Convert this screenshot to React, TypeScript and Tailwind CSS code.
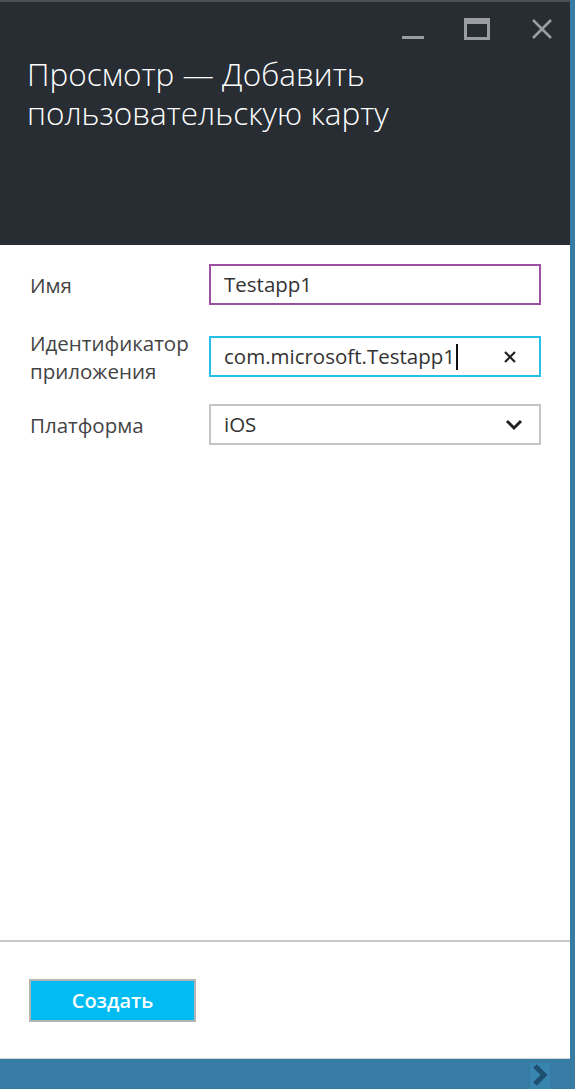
import React from "react";

const font = { fontFamily: '"Open Sans", "Noto Sans", sans-serif' };

const WindowControls: React.FC = () => (
  <div className="flex items-start justify-end h-[40px] pt-[16px] pr-[17px]">
    <svg width="22" height="22" viewBox="0 0 22 22" className="mr-[40px]">
      <rect x="0" y="18" width="22" height="3" fill="#9a9ea2" />
    </svg>
    <svg width="26" height="22" viewBox="0 0 26 22" className="mr-[41px]">
      <rect x="1.5" y="1.5" width="23" height="19" fill="none" stroke="#9a9ea2" strokeWidth="3" />
      <rect x="1" y="1" width="24" height="5" fill="#9a9ea2" />
    </svg>
    <svg width="22" height="22" viewBox="0 0 22 22">
      <path d="M2 2 L20 20 M20 2 L2 20" stroke="#9a9ea2" strokeWidth="2.5" />
    </svg>
  </div>
);

const Field: React.FC<{ label: React.ReactNode; children: React.ReactNode; className?: string }> = ({ label, children, className }) => (
  <div className={`flex items-center h-[41px] ${className ?? ""}`}>
    <div className="w-[209px] shrink-0 pl-[30px] text-[20.5px] leading-[28px] text-[#444]">{label}</div>
    {children}
  </div>
);

export default function App() {
  return (
    <div className="w-[575px] h-[1089px] flex flex-col bg-[#367ca4]" style={font}>
      <div className="flex flex-1">
        <div className="w-[570px] flex flex-col bg-white">
          <div className="h-[245px] bg-[#272d33] border-t-2 border-[#4a4f54]">
            <WindowControls />
            <h1 className="pl-[27px] pt-[12px] text-[31.5px] leading-[39px] font-light text-white">
              Просмотр — Добавить
              <br />
              пользовательскую карту
            </h1>
          </div>

          <div className="flex-1 pt-[19px]">
            <Field label="Имя">
              <div className="w-[332px] h-[41px] border-2 border-[#9c4f9d] flex items-center pl-[13px] text-[20.5px] text-[#333]">
                Testapp1
              </div>
            </Field>
            <Field label={<>Идентификатор<br />приложения</>} className="mt-[31px]">
              <div className="w-[332px] h-[41px] border-2 border-[#25bfe8] flex items-center pl-[13px] pr-[22px] text-[20.5px] text-[#333]">
                <span>com.microsoft.Testapp1</span>
                <span className="w-[2px] h-[26px] bg-[#111] ml-[1px]" />
                <svg width="14" height="14" viewBox="0 0 14 14" className="ml-auto">
                  <path d="M2 2 L12 12 M12 2 L2 12" stroke="#222" strokeWidth="2.2" />
                </svg>
              </div>
            </Field>
            <Field label="Платформа" className="mt-[27px]">
              <div className="w-[332px] h-[41px] border-2 border-[#c4c4c4] flex items-center pl-[13px] pr-[16px] text-[20.5px] text-[#333]">
                <span>iOS</span>
                <svg width="18" height="12" viewBox="0 0 18 12" className="ml-auto">
                  <path d="M2 2 L9 9 L16 2" fill="none" stroke="#222" strokeWidth="3" />
                </svg>
              </div>
            </Field>
          </div>

          <div className="h-[119px] border-t-2 border-[#c8c8c8] pt-[37px] pl-[29px] border-b border-b-[#d4d4d4]">
            <button className="w-[167px] h-[43px] bg-[#00bcf2] border-2 border-[#b4b4b4] text-white text-[20px] font-semibold">
              Создать
            </button>
          </div>
        </div>
        <div className="w-[5px]" />
      </div>
      <div className="h-[30px] flex justify-end items-end pr-[25px]">
        <div className="w-[20px] h-[26px] bg-[#3a84b0] flex items-start justify-center pt-[1px]">
          <svg width="16" height="22" viewBox="0 0 16 22">
            <path d="M3 2 L12 11 L3 20" fill="none" stroke="#1d4f70" strokeWidth="5" />
          </svg>
        </div>
      </div>
    </div>
  );
}
